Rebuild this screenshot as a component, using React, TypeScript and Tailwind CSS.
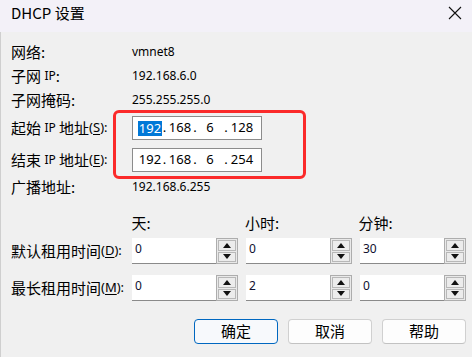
import React from "react";

const cjk = { fontFamily: '"Noto Sans CJK SC", "Noto Sans", sans-serif' };
const lat = { fontFamily: '"Noto Sans", "Liberation Sans", sans-serif' };

function Key({ k }: { k: string }) {
  return (
    <span className="text-[13px]" style={lat}>
      (<span className="underline underline-offset-2">{k}</span>):
    </span>
  );
}

function Spin({ value }: { value: string }) {
  return (
    <div className="flex h-[26px] w-[106px]">
      <div
        className="flex-1 bg-white border-b border-[#8a8a8a] pl-[3px] pt-[3px] text-[12px] leading-[16px] text-[#101030]"
        style={lat}
      >
        {value}
      </div>
      <div className="w-[22px] border border-[#adadad] bg-[#e9e9e9] flex flex-col p-[1px] gap-[1px]">
        <div className="flex-1 border border-[#b8b8b8] bg-[#ececec] flex items-center justify-center">
          <svg width="8" height="5" viewBox="0 0 8 5">
            <polygon points="4,0 8,5 0,5" fill="#111" />
          </svg>
        </div>
        <div className="flex-1 border border-[#b8b8b8] bg-[#ececec] flex items-center justify-center">
          <svg width="8" height="5" viewBox="0 0 8 5">
            <polygon points="0,0 8,0 4,5" fill="#111" />
          </svg>
        </div>
      </div>
    </div>
  );
}

function IpBox({ a, b, c, d, sel }: { a: string; b: string; c: string; d: string; sel?: boolean }) {
  return (
    <div
      className="h-[24px] w-[130px] bg-white border border-[#8c8c8c] flex items-center pl-[5px] text-[13px] text-black"
      style={lat}
    >
      <span className="w-[24px] flex justify-center">
        {sel ? (
          <span className="bg-[#0078d7] text-white leading-[15px] px-[1px]">{a}</span>
        ) : (
          <span>{a}</span>
        )}
      </span>
      <span className="w-[5px] text-center">.</span>
      <span className="w-[26px] text-center">{b}</span>
      <span className="w-[4px] text-center">.</span>
      <span className="w-[26px] text-center">{c}</span>
      <span className="w-[6px] text-center">.</span>
      <span className="w-[26px] text-center">{d}</span>
    </div>
  );
}

function Btn({ label, def }: { label: string; def?: boolean }) {
  return (
    <div
      className={
        "w-[84px] h-[25px] rounded-[4px] flex items-center justify-center text-[15px] text-black " +
        (def ? "border border-[#0067c0] bg-[#f7f9fc]" : "border border-[#d0d0d0] border-b-[#c2c2c2] bg-[#fdfdfd]")
      }
      style={cjk}
    >
      {label}
    </div>
  );
}

export default function App() {
  const labelCls = "w-[121px] shrink-0 text-[15px] text-black flex items-center";
  const valCls = "text-[12px] text-black";
  return (
    <div className="w-[472px] h-[357px] bg-[#f0f0f0] relative overflow-hidden">
      <div className="h-[32px] bg-[#f3f1f8] flex items-start justify-between pl-[11px] pr-[10px] pt-[2px]">
        <span className="text-[15px] text-black leading-[22px]" style={cjk}>
          DHCP 设置
        </span>
        <svg width="14" height="14" viewBox="0 0 14 14" className="mt-[4px]">
          <path d="M1 1 L13 13 M13 1 L1 13" stroke="#111" strokeWidth="1.1" />
        </svg>
      </div>
      <div className="border-l border-[#cfcfcf] h-[325px] pl-[10px] pt-[8px] flex flex-col">
        <div className="flex h-[24px] items-center">
          <div className={labelCls} style={cjk}>网络:</div>
          <div className={valCls} style={lat}>vmnet8</div>
        </div>
        <div className="flex h-[24px] items-center">
          <div className={labelCls} style={cjk}>
            子网&nbsp;<span className="text-[12px]" style={lat}>IP</span>:
          </div>
          <div className={valCls} style={lat}>192.168.6.0</div>
        </div>
        <div className="flex h-[24px] items-center">
          <div className={labelCls} style={cjk}>子网掩码:</div>
          <div className={valCls} style={lat}>255.255.255.0</div>
        </div>
        <div className="flex h-[24px] items-center mt-[4px]">
          <div className={labelCls} style={cjk}>
            起始&nbsp;<span className="text-[12px]" style={lat}>IP</span>&nbsp;地址<Key k="S" />
          </div>
          <IpBox a="192" b="168" c="6" d="128" sel />
        </div>
        <div className="flex h-[24px] items-center mt-[8px]">
          <div className={labelCls} style={cjk}>
            结束&nbsp;<span className="text-[12px]" style={lat}>IP</span>&nbsp;地址<Key k="E" />
          </div>
          <IpBox a="192" b="168" c="6" d="254" />
        </div>
        <div className="flex h-[24px] items-center mt-[3px]">
          <div className={labelCls} style={cjk}>广播地址:</div>
          <div className={valCls} style={lat}>192.168.6.255</div>
        </div>
        <div className="flex h-[20px] items-center mt-[14px]" style={cjk}>
          <div className="w-[121px]" />
          <div className="w-[114px] text-[15px]">天:</div>
          <div className="w-[114px] text-[15px]">小时:</div>
          <div className="w-[114px] text-[15px]">分钟:</div>
        </div>
        <div className="flex h-[26px] items-center mt-[5px]">
          <div className={labelCls} style={cjk}>
            默认租用时间<Key k="D" />
          </div>
          <div className="flex gap-[8px]">
            <Spin value="0" />
            <Spin value="0" />
            <Spin value="30" />
          </div>
        </div>
        <div className="flex h-[26px] items-center mt-[11px]">
          <div className={labelCls} style={cjk}>
            最长租用时间<Key k="M" />
          </div>
          <div className="flex gap-[8px]">
            <Spin value="0" />
            <Spin value="2" />
            <Spin value="0" />
          </div>
        </div>
        <div className="flex justify-end gap-[10px] pr-[6px] mt-[18px]">
          <Btn label="确定" def />
          <Btn label="取消" />
          <Btn label="帮助" />
        </div>
      </div>
      <div className="absolute left-[113px] top-[110px] w-[193px] h-[69px] border-[3px] border-[#fb2a2a] rounded-[6px]" />
    </div>
  );
}
